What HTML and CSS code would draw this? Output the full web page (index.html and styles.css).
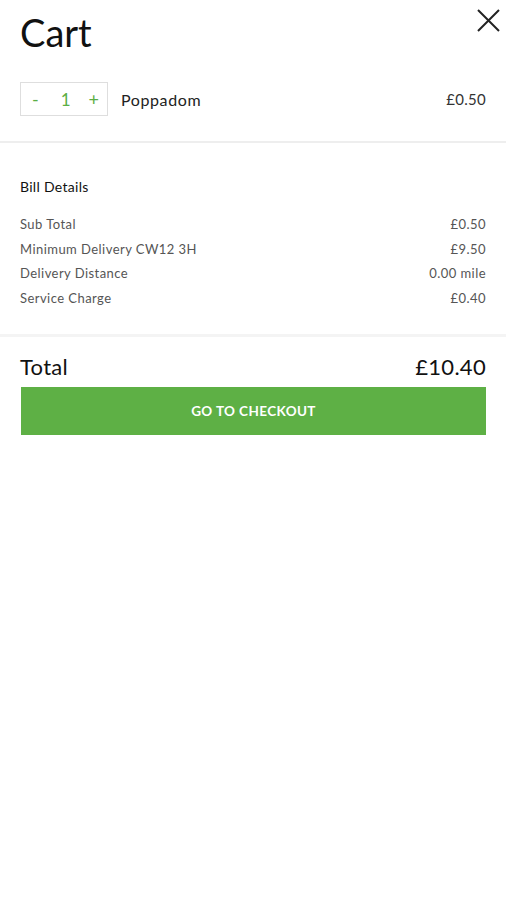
FILE: index.html
```html
<!DOCTYPE html>
<html lang="en">
<head>
  <meta charset="UTF-8" />
  <meta name="viewport" content="width=device-width, initial-scale=1.0" />
  <title>Cart</title>
  <link rel="stylesheet" href="styles.css">
</head>
<body>
  <div class="cart">
    <div class="cart-header">
      <h1>Cart</h1>
      <button class="close-btn" aria-label="Close">
        <svg width="24" height="24" viewBox="0 0 24 24">
          <path d="M2 1 L23 22 M23 1 L2 22" stroke="#222" stroke-width="2" fill="none" />
        </svg>
      </button>
    </div>

    <div class="item-row">
      <div class="qty-box">
        <span class="qty-btn">-</span>
        <span class="qty-num">1</span>
        <span class="qty-btn">+</span>
      </div>
      <div class="item-name">Poppadom</div>
      <div class="item-price">£0.50</div>
    </div>

    <div class="divider"></div>

    <div class="bill">
      <div class="bill-title">Bill Details</div>
      <div class="bill-row"><span>Sub Total</span><span>£0.50</span></div>
      <div class="bill-row"><span>Minimum Delivery CW12 3H</span><span>£9.50</span></div>
      <div class="bill-row"><span>Delivery Distance</span><span>0.00 mile</span></div>
      <div class="bill-row"><span>Service Charge</span><span>£0.40</span></div>
    </div>

    <div class="divider thick"></div>

    <div class="total-row">
      <span>Total</span>
      <span>£10.40</span>
    </div>
    <button class="checkout-btn">GO TO CHECKOUT</button>
  </div>
</body>
</html>
```

FILE: styles.css
```css
body {
  margin: 0;
  padding: 0;
  background-color: #ffffff;
  color: #1a1a1a;
  font-family: Lato, 'Open Sans', sans-serif;
}

.cart {
  padding: 0;
}

.cart-header {
  display: flex;
  justify-content: space-between;
  align-items: flex-start;
  padding: 0 6px 0 20px;
  height: 70px;
}

.cart-header h1 {
  margin: 0;
  padding-top: 9px;
  font-size: 38px;
  font-weight: 400;
  color: #111;
}

.close-btn {
  border: none;
  background: none;
  padding: 0;
  margin-top: 9px;
  width: 24px;
  height: 24px;
  cursor: pointer;
}

.item-row {
  display: flex;
  align-items: center;
  padding: 0 20px;
  margin-top: 12px;
  height: 34px;
}

.qty-box {
  display: flex;
  align-items: center;
  justify-content: space-between;
  width: 88px;
  height: 34px;
  box-sizing: border-box;
  border: 1px solid #dedede;
  padding: 0 8px 0 11px;
  color: #5aae45;
  font-size: 18px;
}

.qty-num {
  font-size: 17px;
  margin-left: 4px;
}

.item-name {
  flex: 1;
  margin-left: 13px;
  font-size: 16px;
  letter-spacing: 0.6px;
  color: #222;
}

.item-price {
  font-size: 15px;
  letter-spacing: 0.3px;
  color: #333;
}

.divider {
  height: 2px;
  background-color: #eeeeee;
  margin-top: 25px;
}

.divider.thick {
  height: 3px;
  background-color: #f4f4f4;
  margin-top: 23px;
}

.bill {
  padding: 0 20px;
}

.bill-title {
  margin-top: 35px;
  margin-bottom: 17px;
  font-size: 14px;
  letter-spacing: 0.3px;
  color: #111;
}

.bill-row {
  display: flex;
  justify-content: space-between;
  font-size: 13px;
  letter-spacing: 0.45px;
  color: #555;
  height: 24.7px;
  line-height: 24.7px;
}

.total-row {
  display: flex;
  justify-content: space-between;
  padding: 0 20px;
  margin-top: 16px;
  font-size: 22px;
  letter-spacing: 0.3px;
  color: #111;
  line-height: 28px;
}

.checkout-btn {
  display: block;
  margin: 6px 20px 0 21px;
  width: calc(100% - 41px);
  height: 48px;
  border: none;
  background-color: #5eb045;
  color: #ffffff;
  font-family: Lato, sans-serif;
  font-weight: 700;
  font-size: 13.5px;
  letter-spacing: 0.4px;
}
```
